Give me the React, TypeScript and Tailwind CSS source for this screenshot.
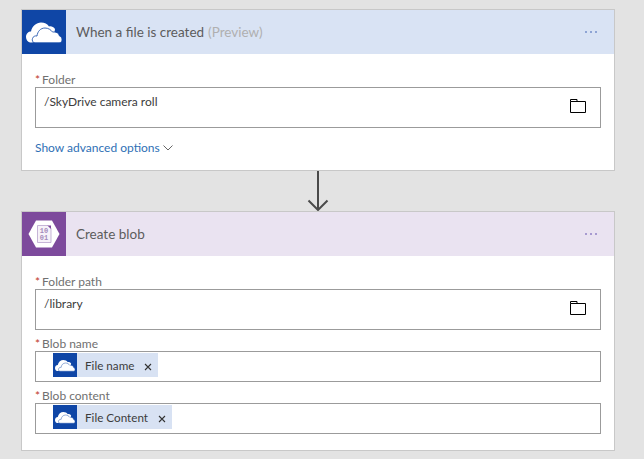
const font = "font-['Lato','Noto_Sans',sans-serif]";

function CloudIcon({ className }: { className: string }) {
  return (
    <svg viewBox="0 0 36 21" className={className}>
      <path
        d="M4 20.5C1.5 20 0 17.5 0 15C0 11.5 2.5 9.5 5 9.5C6 4 10.5 0.5 15 0.5C18.5 0.5 21.5 2 23 4.5C25.5 4 27.5 5 29 7L28 14L6 20.5Z"
        fill="#fff"
      />
      <path
        d="M9 20.8C6.5 20.8 5.8 18 6.5 16.5C7 14.5 9 13.5 11 14C11.5 9.5 14.5 6 19 6C22.5 6 25 8 26.5 10C30 9.5 33 11 33.5 14C35.5 14.5 36 16.5 36 18C36 20 34.5 20.8 33 20.8Z"
        fill="#fff"
        stroke="#0f46a6"
        strokeWidth="0.8"
      />
    </svg>
  );
}

function BlobIcon() {
  return (
    <svg viewBox="0 0 32 28" className="h-[28px] w-[32px]">
      <path d="M8 0.5H24L31.5 14L24 27.5H8L0.5 14Z" fill="#fff" />
      <path d="M9.5 5.5H20L23 8.5V22.5H9.5Z" fill="#f6f2f9" stroke="#b9a3cd" strokeWidth="0.8" />
      <path d="M19.5 5.5L23 9V5.5Z" fill="#7d4a9c" />
      <text x="16" y="13" textAnchor="middle" fontSize="7" fontWeight="700" fill="#a48abb" fontFamily="Liberation Mono, monospace">10</text>
      <text x="16" y="20" textAnchor="middle" fontSize="7" fontWeight="700" fill="#a48abb" fontFamily="Liberation Mono, monospace">01</text>
    </svg>
  );
}

function FolderIcon() {
  return (
    <svg viewBox="0 0 16 14" className="h-[14px] w-[16px] shrink-0" fill="none" stroke="#000" strokeWidth="1">
      <path d="M0.5 2.5V13.5H15.5V2.5H7V0.5H0.5V2.5H7" />
    </svg>
  );
}

function Label({ text }: { text: string }) {
  return (
    <div className="flex h-[14px] items-center text-[12px] leading-none text-[#707070]">
      <span className="mr-[2px] text-[#c0392b]">*</span>
      {text}
    </div>
  );
}

function PathField({ label, value }: { label: string; value: string }) {
  return (
    <div>
      <Label text={label} />
      <div className="flex h-[41px] items-start justify-between border border-[#9b9b9b] pt-[6px] pl-[8px] pr-[14px] text-[12px] leading-[16px] text-[#3c3c3c]">
        <span>{value}</span>
        <span className="mt-[5px]">
          <FolderIcon />
        </span>
      </div>
    </div>
  );
}

function TokenField({ label, token }: { label: string; token: string }) {
  return (
    <div>
      <Label text={label} />
      <div className="flex h-[31px] items-start border border-[#9b9b9b] pl-[17px] pt-[1px]">
        <div className="flex h-[24px] items-center bg-[#d8e2f3] pr-[6px] text-[11.7px] text-[#3c3c3c]">
          <span className="flex h-[24px] w-[24px] items-center justify-center bg-[#0f46a6]">
            <CloudIcon className="h-[13px] w-[20px]" />
          </span>
          <span className="ml-[8px] mt-[1px]">{token}</span>
          <svg viewBox="0 0 8 8" className="ml-[10px] mt-[3px] h-[8px] w-[8px]" stroke="#333" strokeWidth="1.1">
            <path d="M1 1L7 7M7 1L1 7" />
          </svg>
        </div>
      </div>
    </div>
  );
}

function Card({
  icon,
  iconBg,
  headerBg,
  dots,
  title,
  note,
  children,
  bodyClass,
}: {
  icon: React.ReactNode;
  iconBg: string;
  headerBg: string;
  dots: string;
  title: string;
  note?: string;
  children: React.ReactNode;
  bodyClass: string;
}) {
  return (
    <div className="border border-[#c8c8c8] bg-white">
      <div className={`flex h-[44px] items-center ${headerBg}`}>
        <div className={`flex h-[44px] w-[44px] items-center justify-center ${iconBg}`}>{icon}</div>
        <div className="ml-[10px] text-[13.5px] text-[#5c5c5c]">
          {title}
          {note && <span className="ml-[4px] text-[#b0b0b0]">{note}</span>}
        </div>
        <div className={`ml-auto mr-[17px] flex gap-[3px] ${dots}`}>
          <span className="h-[1.5px] w-[2px] bg-current" />
          <span className="h-[1.5px] w-[2px] bg-current" />
          <span className="h-[1.5px] w-[2px] bg-current" />
        </div>
      </div>
      <div className={bodyClass}>{children}</div>
    </div>
  );
}

export default function App() {
  return (
    <div className={`h-[459px] w-[644px] overflow-hidden bg-[#e3e3e3] pl-[21px] pt-[9px] ${font}`}>
      <div className="w-[594px]">
        <Card
          icon={<CloudIcon className="h-[21px] w-[36px]" />}
          iconBg="bg-[#0f46a6]"
          headerBg="bg-[#d9e3f4]"
          dots="text-[#8ea4d4]"
          title="When a file is created"
          note="(Preview)"
          bodyClass="h-[116px] px-[13px] pt-[19px]"
        >
          <PathField label="Folder" value="/SkyDrive camera roll" />
          <div className="mt-[12px] flex items-center text-[12px] leading-[16px] text-[#2f6fb5]">
            Show advanced options
            <svg viewBox="0 0 10 6" className="ml-[3px] h-[6px] w-[10px]" fill="none" stroke="#555" strokeWidth="0.9">
              <path d="M0.5 0.5L5 5L9.5 0.5" />
            </svg>
          </div>
        </Card>
        <div className="flex h-[40px] justify-center">
          <svg viewBox="0 0 22 40" className="h-[40px] w-[22px]" fill="none" stroke="#4a4a4a" strokeWidth="2">
            <path d="M11 0V39M1.5 29.5L11 39L20.5 29.5" />
          </svg>
        </div>
        <Card
          icon={<BlobIcon />}
          iconBg="bg-[#7d4a9c]"
          headerBg="bg-[#eae3f1]"
          dots="text-[#a79ad0]"
          title="Create blob"
          bodyClass="flex h-[194px] flex-col gap-[7px] px-[13px] pt-[19px]"
        >
          <PathField label="Folder path" value="/library" />
          <TokenField label="Blob name" token="File name" />
          <TokenField label="Blob content" token="File Content" />
        </Card>
      </div>
    </div>
  );
}
